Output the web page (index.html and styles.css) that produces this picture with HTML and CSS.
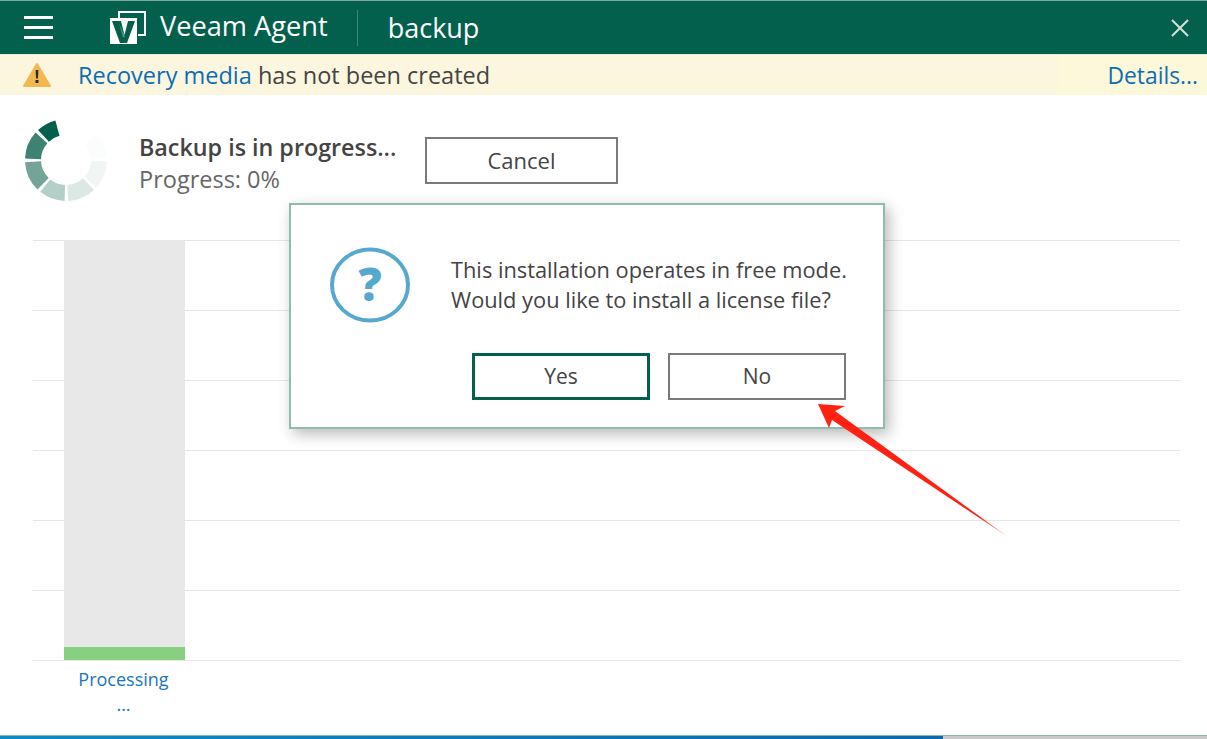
FILE: index.html
```html
<!DOCTYPE html>
<html lang="en">
<head>
    <meta charset="UTF-8" />
    <title>Veeam Agent - backup</title>
    <link rel="stylesheet" href="styles.css">
</head>
<body>
    <header class="titlebar">
        <svg class="menu-icon" width="29" height="23" viewBox="0 0 29 23">
            <path d="M0 1.500h29M0 11.500h29M0 21.500h29" stroke="#fff" stroke-width="3" fill="none" />
        </svg>
        <svg class="logo" width="37" height="34" viewBox="0 0 37 34">
            <path d="M9 7V1h26v23h-7" stroke="#fff" stroke-width="2" fill="none" />
            <rect x="0" y="7" width="27" height="26" fill="#fff" />
            <path d="M2 10h9l3.500 14L18 10h7l-8 22h-7z" fill="#03604c" />
            <path d="M9 12l4 14h2z" fill="#5f9c8e" />
        </svg>
        <span class="product">Veeam Agent</span>
        <span class="title-sep"></span>
        <span class="job">backup</span>
        <svg class="close-icon" width="20" height="20" viewBox="0 0 20 20">
            <path d="M2 2l16 16M18 2L2 18" stroke="#d5e3df" stroke-width="2" fill="none" />
        </svg>
    </header>

    <div class="notice">
        <svg class="warn-icon" width="30" height="26" viewBox="0 0 30 26">
            <path d="M15 2L28 24H2z" fill="#f2b84f" stroke="#f2b84f" stroke-width="2" stroke-linejoin="round" />
            <path d="M13.600 8h2.800l-.5 8.500h-1.800z" fill="#2b2b2b" />
            <rect x="13.500" y="18" width="3" height="3" fill="#2b2b2b" />
        </svg>
        <span class="notice-text"><a href="#media">Recovery media</a> has not been created</span>
        <a class="details" href="#details">Details...</a>
    </div>

    <main class="content">
        <section class="status">
            <svg class="spinner" width="94" height="88" viewBox="0 0 94 88">
                <g class="spinner-ring">
                    <circle cx="46" cy="44" r="33" pathLength="360" stroke-dasharray="28 332" transform="rotate(-133 46 44)" stroke="#03604c" />
                    <circle cx="46" cy="44" r="33" pathLength="360" stroke-dasharray="40 320" transform="rotate(-178 46 44)" stroke="#3d8273" />
                    <circle cx="46" cy="44" r="33" pathLength="360" stroke-dasharray="43 317" transform="rotate(-226 46 44)" stroke="#74a398" />
                    <circle cx="46" cy="44" r="33" pathLength="360" stroke-dasharray="37 323" transform="rotate(-268 46 44)" stroke="#b4cfc8" />
                    <circle cx="46" cy="44" r="33" pathLength="360" stroke-dasharray="40 320" transform="rotate(-313 46 44)" stroke="#dbe8e4" />
                    <circle cx="46" cy="44" r="33" pathLength="360" stroke-dasharray="40 320" transform="rotate(-358 46 44)" stroke="#f1f6f4" />
                    <circle cx="46" cy="44" r="33" pathLength="360" stroke-dasharray="37 323" transform="rotate(-40 46 44)" stroke="#fbfcfc" />
                </g>
            </svg>
            <div class="status-text">
                <div class="status-title">Backup is in progress...</div>
                <div class="status-sub">Progress: 0%</div>
            </div>
            <button class="btn cancel" type="button">Cancel</button>
        </section>

        <section class="chart">
            <div class="grid">
                <div class="grid-row"></div>
                <div class="grid-row"></div>
                <div class="grid-row"></div>
                <div class="grid-row"></div>
                <div class="grid-row"></div>
                <div class="grid-row"></div>
            </div>
            <div class="bar">
                <div class="bar-fill"></div>
            </div>
            <div class="bar-label">Processing<br>...</div>
        </section>
    </main>

    <footer class="progress-strip">
        <div class="progress-done"></div>
    </footer>

    <!-- license prompt sits over the chart -->
    <div class="dialog">
        <div class="dialog-body">
            <svg class="question" width="82" height="76" viewBox="0 0 82 76">
                <ellipse cx="41" cy="38" rx="38" ry="35.500" fill="none" stroke="#57a8cf" stroke-width="4" />
                <text x="41" y="54" text-anchor="middle" class="question-mark">?</text>
            </svg>
            <p class="dialog-text">This installation operates in free mode.<br>Would you like to install a license file?</p>
        </div>
        <div class="dialog-actions">
            <button class="btn btn-primary" type="button">Yes</button>
            <button class="btn" type="button">No</button>
        </div>
    </div>

    <svg class="arrow" width="200" height="140" viewBox="0 0 200 140">
        <defs>
            <linearGradient id="arrow-fade" x1="0" y1="0" x2="1" y2="1">
                <stop offset="0.85" stop-color="#ff2213" />
                <stop offset="1" stop-color="#ffb0a8" />
            </linearGradient>
        </defs>
        <path d="M7 4L34 6 24 11 197 137 21 20 18 28z" fill="url(#arrow-fade)" />
    </svg>
</body>
</html>
```

FILE: styles.css
```css
html, body { margin: 0; height: 100%; }
body { position: relative; width: 1207px; height: 739px; overflow: hidden; background: #fff; font-family: "Open Sans", "Noto Sans", Arial, sans-serif; color: #444; display: flex; flex-direction: column; }
a { color: #0b6eb5; text-decoration: none; }

.titlebar { height: 53px; flex: none; display: flex; align-items: center; background: #03604c; border-top: 1px solid #7fa99f; color: #fff; padding-left: 24px; box-sizing: content-box; }
.menu-icon { margin-right: 57px; }
.logo { margin-right: 13px; margin-top: 1px; }
.product { font-size: 27.200px; margin-top: -4px; white-space: nowrap; }
.title-sep { width: 1px; height: 36px; background: #3f8475; margin: 0 30px 0 29px; }
.job { font-size: 27px; margin-top: -1px; }
.close-icon { margin-left: auto; margin-right: 17px; }

.notice { height: 41px; flex: none; display: flex; align-items: center; background: linear-gradient(to right, #fdf6df 1058px, #fdf8da 1058px); padding-left: 23px; font-size: 23.500px; border-top: 1px solid #e9ecd9; box-sizing: border-box; }
.warn-icon { margin-right: 26px; margin-left: -1px; }
.notice-text { color: #444; }
.details { margin-left: auto; margin-right: 9px; font-size: 22.800px; }

.content { flex: 1; display: flex; flex-direction: column; min-height: 0; }
.status { display: flex; align-items: flex-start; height: 145px; flex: none; box-sizing: border-box; padding: 21px 0 0 20px; }
.spinner { margin-right: 25px; }
.spinner-ring circle { fill: none; stroke-width: 16; }
.status-text { margin-top: 15px; margin-right: 28px; width: 258px; }
.status-title { font-size: 23.300px; font-weight: 600; line-height: 32px; white-space: nowrap; }
.status-sub { font-size: 23.500px; line-height: 32px; color: #666; }

.btn { width: 178px; height: 47px; background: #fff; border: 2px solid #7a7a7a; font: inherit; font-size: 21px; color: #444; padding: 0 0 2px; }
.cancel { width: 193px; margin-top: 21px; font-size: 22px; }
.btn-primary { border: 3px solid #03604c; }

.chart { position: relative; margin: 0 27px 0 33px; flex: none; }
.grid { display: flex; flex-direction: column; border-bottom: 1px solid #e6e6e6; }
.grid-row { height: 69px; border-top: 1px solid #e6e6e6; }
.bar { position: absolute; left: 31px; top: 0; height: 420px; width: 121px; background: #e9e8e8; display: flex; align-items: flex-end; }
.bar-fill { width: 100%; height: 13px; background: #88cf7f; }
.bar-label { width: 121px; margin-left: 30px; margin-top: 6px; text-align: center; font-size: 18px; line-height: 25px; color: #1b75bb; }

.progress-strip { position: absolute; left: 0; right: 0; bottom: 0; height: 4px; background: #c9c9c9; border-top: 1px solid #86b5a9; box-sizing: border-box; }
.progress-done { width: 943px; height: 100%; background: linear-gradient(to right, #0a8bc8, #0a69ae); }

.dialog { position: absolute; left: 289px; top: 203px; width: 596px; height: 226px; box-sizing: border-box; background: #fff; border: 2px solid #8dbcb0; box-shadow: 4px 5px 14px rgba(0, 0, 0, 0.28); display: flex; flex-direction: column; }
.dialog-body { display: flex; padding: 42px 0 0 38px; height: 148px; box-sizing: border-box; }
.question { margin-right: 40px; flex: none; }
.question-mark { font-family: "Open Sans", sans-serif; font-weight: 800; font-size: 46px; fill: #57a8cf; }
.dialog-text { margin: 8px 0 0; font-size: 21.800px; line-height: 30px; color: #444; white-space: nowrap; }
.dialog-actions { display: flex; gap: 18px; padding-left: 181px; }

.arrow { position: absolute; left: 811px; top: 400px; overflow: visible; }
```
